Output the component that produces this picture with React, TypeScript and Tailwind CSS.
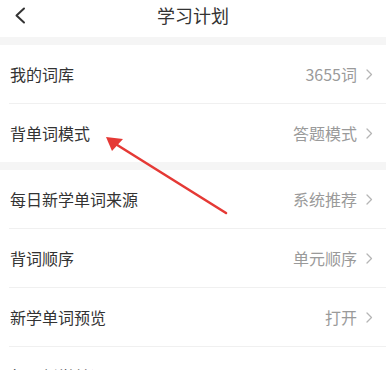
import React from "react";

const font = { fontFamily: '"Noto Sans CJK SC", "Noto Sans", sans-serif' };

function Chevron() {
  return (
    <svg width="7" height="11" viewBox="0 0 7 11" className="ml-[9px] shrink-0">
      <path d="M1 1 L5.5 5.5 L1 10" fill="none" stroke="#b5b5b5" strokeWidth="1.3" strokeLinecap="round" strokeLinejoin="round" />
    </svg>
  );
}

function Row({ label, value, divider }: { label: string; value: string; divider?: boolean }) {
  return (
    <div className="bg-white">
      <div className="h-[58px] flex items-center pl-[10px] pr-[13px]">
        <div className="flex-1 text-[16px] text-[#333333]">{label}</div>
        <div className="text-[16px] text-[#9a9a9a]">{value}</div>
        <Chevron />
      </div>
      {divider && <div className="ml-[9px] h-px bg-[#f0f0f0]" />}
    </div>
  );
}

export default function App() {
  return (
    <div className="relative w-[386px] h-[370px] overflow-hidden bg-white" style={font}>
      <div className="h-[37px] flex items-center justify-center relative bg-white">
        <svg width="12" height="18" viewBox="0 0 12 18" className="absolute left-[14px] top-[7px]">
          <path d="M10 1.5 L2.5 8.5 L10 15.5" fill="none" stroke="#333" strokeWidth="2" strokeLinecap="round" strokeLinejoin="round" />
        </svg>
        <div className="text-[18px] text-[#333333] -mt-[7px]">学习计划</div>
      </div>
      <div className="h-[8px] bg-[#f5f5f5]" />
      <Row label="我的词库" value="3655词" divider />
      <Row label="背单词模式" value="答题模式" />
      <div className="h-[8px] bg-[#f5f5f5]" />
      <Row label="每日新学单词来源" value="系统推荐" divider />
      <Row label="背词顺序" value="单元顺序" divider />
      <Row label="新学单词预览" value="打开" divider />
      <Row label="每日新学单词量" value="20" />
      <svg className="absolute left-0 top-0 pointer-events-none" width="386" height="370" viewBox="0 0 386 370">
        <line x1="226" y1="213" x2="114" y2="143" stroke="#e53935" strokeWidth="2.6" strokeLinecap="round" />
        <polygon points="106,137 123,139 112,151" fill="#e53935" />
      </svg>
    </div>
  );
}
